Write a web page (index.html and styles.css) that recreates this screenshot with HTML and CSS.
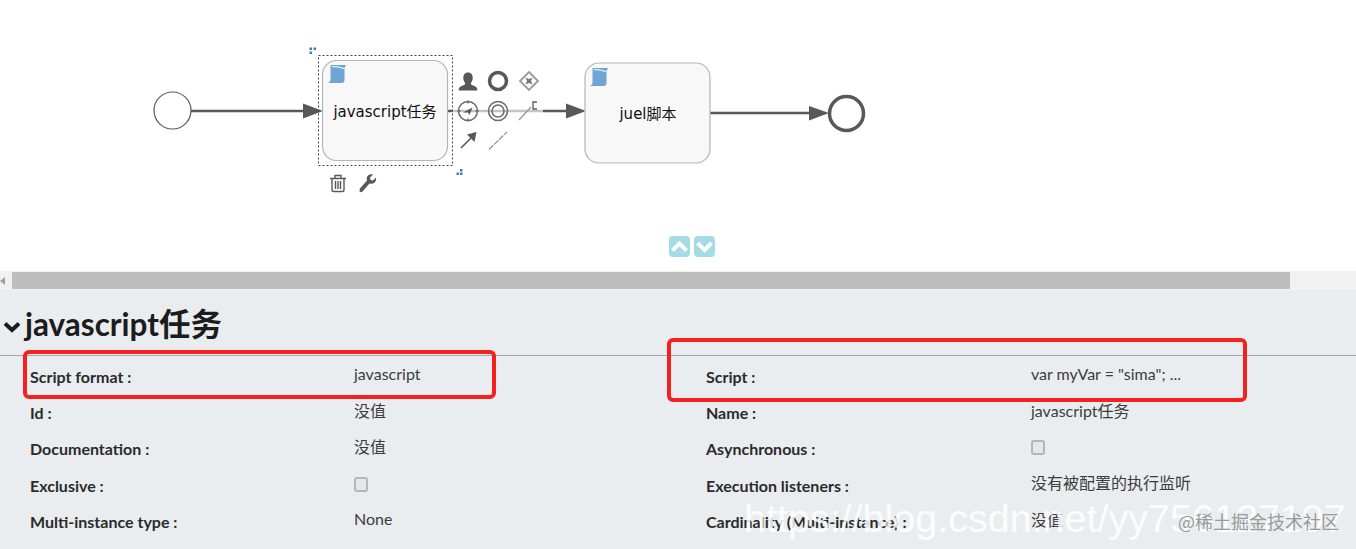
FILE: index.html
```html
<!DOCTYPE html>
<html>
<head>
    <title>Process editor</title>
    <link rel="stylesheet" href="styles.css">
</head>
<body>
    <div class="canvas">
        <svg class="diagram" width="1356" height="271" viewBox="0 0 1356 271">
            <defs>
                <g id="scroll">
                    <path d="M3 0H18.500C17 1 16.500 2.500 16.500 4.500V15c0 2-1 3-3 3H0c1.500-1 2.500-2 2.500-4V2C2.500 1 2.700.5 3 0z"/>
                    <path class="curl" d="M4 1.800C8 1 12 2.500 16.500 3.500"/>
                </g>
            </defs>

            <!-- flows -->
            <path class="flow" d="M191 111H305"/>
            <path class="arrow" d="M303 103.500L323 111L303 118.500z"/>
            <path class="flow" d="M447 111H452M543 111H566"/>
            <path class="flow-faded" d="M452 111H543"/>
            <path class="arrow" d="M566 103.500L586 111L566 118.500z"/>
            <path class="flow" d="M710 113H811"/>
            <path class="arrow" d="M809 106L829 113L809 120.500z"/>

            <!-- events -->
            <circle class="start" cx="172.500" cy="110.500" r="18.500"/>
            <circle class="end" cx="846.500" cy="113.500" r="17"/>

            <!-- tasks -->
            <rect class="task" x="322.500" y="60.500" width="125" height="100" rx="14"/>
            <rect class="task" x="585" y="63" width="125" height="100" rx="14"/>
            <use href="#scroll" class="scroll" x="328" y="65"/>
            <use href="#scroll" class="scroll" x="590" y="68"/>
            <text class="label" x="385" y="116.500" text-anchor="middle">javascript任务</text>
            <text class="label" x="648" y="119" text-anchor="middle">juel脚本</text>

            <!-- selection -->
            <rect class="select" x="318.500" y="55.500" width="134" height="110"/>
            <path class="handle" d="M309.500 47.500h2.500v2.500h-2.500zM313.500 47.500h2.500v2.500h-2.500zM309.500 51.500h2.500v2.500h-2.500zM460 169h2.500v2.500H460zM456.500 172.500h2.500v2.500h-2.500zM460 172.500h2.500v2.500H460z"/>

            <!-- shape menu -->
            <path class="tool" d="M468 72.500c3.300 0 4.700 2.600 4.700 5.200 0 2.700-1 4.200-1.900 5.300 0 1.700 1 2.200 3 2.800 2.600.8 3.600 2.100 3.600 4.700h-18.800c0-2.600 1-3.900 3.600-4.700 2-.6 3-1.100 3-2.800-.9-1.100-1.900-2.600-1.900-5.300 0-2.600 1.400-5.200 4.700-5.200z"/>
            <circle class="ring" cx="498" cy="81" r="8.500"/>
            <path class="diamond" d="M529 72l9 9-9 9-9-9z"/>
            <path class="tool-soft" d="M525.500 77.500l3.500 1.500 3.500-1.500-1.500 3.500 1.500 3.500-3.500-1.500-3.500 1.500 1.500-3.500z"/>

            <circle class="dial" cx="468" cy="111" r="9.500"/>
            <path class="ticks" d="M468 100.500v3M468 118.500v3M457.500 111h3M475.500 111h3"/>
            <path class="tool" d="M463 112.500l9.500-5-3 7.500-1.500-2.500z"/>
            <circle class="dial" cx="498" cy="111" r="9.500"/>
            <circle class="dial" cx="498" cy="111" r="6"/>
            <path class="line" d="M519 120L531 107"/>
            <path class="line dark-thin" d="M537 102h-4v7h4"/>

            <path class="line dark" d="M461 148L473 136"/>
            <path class="tool" d="M476.500 132L474.500 142L467 134.500z"/>
            <path class="line" d="M489 149.500L507 132" stroke-dasharray="6 1"/>

            <!-- trash and wrench -->
            <path class="bin" d="M330 178.500h16M335 178v-2.500h6v2.500M332 179v11c0 1 .5 1.500 1.500 1.500h9c1 0 1.500-.5 1.500-1.500v-11M335.500 181v8M338 181v8M340.500 181v8"/>
            <path class="tool" d="M359.500 189l7.500-8.500c-.8-2.500 0-4.500 1.500-5.500 1.500-.9 3-1 4.500-.5l-3 3 .5 2.500 2.500.5 3-3c.4 1.800 0 3.500-1.200 4.800-1.400 1.400-3.300 1.900-5.300 1.200l-7 8c-.8.900-1.800.9-2.500.3-.7-.7-.7-1.600 0-2.300z"/>

            <!-- up and down buttons -->
            <rect class="nudge" x="669" y="236" width="21" height="21" rx="4"/>
            <rect class="nudge" x="694" y="236" width="21" height="21" rx="4"/>
            <path class="chev" d="M672.500 250.500l7-7 7 7"/>
            <path class="chev" d="M697.500 243l7 7 7-7"/>
        </svg>
    </div>

    <div class="scrollbar">
        <span class="scroll-left"></span>
        <div class="scroll-thumb"></div>
    </div>

    <div class="panel">
        <h2 class="panel-title">
            <svg class="title-chev" width="18" height="12" viewBox="0 0 18 12"><path d="M2 2.500l7 6.500 7-6.500"/></svg>
            javascript任务
        </h2>
        <div class="props">
            <div class="prop"><span class="key">Script format :</span><span class="val val-up">javascript</span></div>
            <div class="prop"><span class="key">Script :</span><span class="val val-up">var myVar = "sima"; ...</span></div>
            <div class="prop"><span class="key">Id :</span><span class="val val-up">没值</span></div>
            <div class="prop"><span class="key">Name :</span><span class="val val-up">javascript任务</span></div>
            <div class="prop"><span class="key">Documentation :</span><span class="val val-up">没值</span></div>
            <div class="prop"><span class="key">Asynchronous :</span><span class="val"><input class="check" type="checkbox"></span></div>
            <div class="prop"><span class="key">Exclusive :</span><span class="val"><input class="check" type="checkbox"></span></div>
            <div class="prop"><span class="key">Execution listeners :</span><span class="val val-up">没有被配置的执行监听</span></div>
            <div class="prop"><span class="key">Multi-instance type :</span><span class="val val-up">None</span></div>
            <div class="prop"><span class="key">Cardinality (Multi-instance) :</span><span class="val val-up">没值</span></div>
        </div>
    </div>

    <div class="mark mark-left"></div>
    <div class="mark mark-right"></div>
    <div class="watermark">https://blog.csdn.net/yy756127197</div>
    <div class="juejin">@稀土掘金技术社区</div>
</body>
</html>
```

FILE: styles.css
```css
body {
    margin: 0;
    width: 1356px;
    height: 549px;
    overflow: hidden;
    position: relative;
    background-color: #fff;
    font-family: Lato, "Noto Sans CJK SC", sans-serif;
    color: #222;
}

.canvas {
    height: 271px;
}

.diagram {
    display: block;
}

.flow {
    fill: none;
    stroke: #585858;
    stroke-width: 2.5;
}

.flow-faded {
    fill: none;
    stroke: #c4c4c4;
    stroke-width: 2.5;
}

.arrow {
    fill: #585858;
}

.start {
    fill: #fff;
    stroke: #585858;
    stroke-width: 1.2;
}

.end {
    fill: #fff;
    stroke: #585858;
    stroke-width: 3.5;
}

.task {
    fill: #f8f8f8;
    stroke: #b5b5b5;
    stroke-width: 1.2;
}

.scroll {
    fill: #6ea5d3;
}

.curl {
    fill: none;
    stroke: #e4eef7;
    stroke-width: 1.2;
}

.label {
    font-family: "DejaVu Sans", "Noto Sans CJK SC", sans-serif;
    font-size: 15px;
    fill: #111;
}

.select {
    fill: none;
    stroke: #444;
    stroke-width: 1;
    stroke-dasharray: 2 2;
}

.handle {
    fill: #4a78b5;
}

.tool {
    fill: #585858;
}

.tool-soft {
    fill: #777;
}

.ring {
    fill: none;
    stroke: #585858;
    stroke-width: 3.5;
}

.diamond {
    fill: #fff;
    stroke: #999;
    stroke-width: 1.8;
}

.dial {
    fill: none;
    stroke: #6a6a6a;
    stroke-width: 1.5;
}

.ticks {
    fill: none;
    stroke: #6a6a6a;
    stroke-width: 1.5;
}

.line {
    fill: none;
    stroke: #999;
    stroke-width: 1.3;
}

.line.dark {
    stroke: #585858;
    stroke-width: 1.6;
}

.line.dark-thin {
    stroke: #585858;
    stroke-width: 1.3;
}

.bin {
    fill: none;
    stroke: #585858;
    stroke-width: 1.4;
}

.nudge {
    fill: #a3dbe6;
}

.chev {
    fill: none;
    stroke: #fff;
    stroke-width: 4;
}

.scrollbar {
    height: 19px;
    display: flex;
    align-items: center;
    background-color: #f1f1f1;
    position: relative;
}

.scroll-left {
    width: 0;
    height: 0;
    margin-right: 7px;
    border-top: 4px solid transparent;
    border-bottom: 4px solid transparent;
    border-right: 5px solid #a0a0a0;
}

.scroll-thumb {
    width: 1278px;
    height: 17px;
    background-color: #bebebe;
}

.panel {
    height: 259px;
    background-color: #e9edf0;
}

.panel-title {
    margin: 0;
    height: 66px;
    box-sizing: border-box;
    padding: 16px 0 0 3px;
    display: flex;
    align-items: flex-start;
    gap: 4px;
    font-size: 31.500px;
    line-height: 36px;
    font-weight: 700;
    color: #1c1c1c;
    border-bottom: 1px solid #a5a8ad;
}

.title-chev {
    margin-top: 15px;
}

.title-chev path {
    fill: none;
    stroke: #1c1c1c;
    stroke-width: 4;
}

.props {
    display: grid;
    grid-template-columns: 676px 650px;
    grid-auto-rows: 36.3px;
    padding: 2.2px 0 0 30px;
}

.prop {
    display: flex;
    align-items: center;
    font-size: 16px;
}

.key {
    font-weight: 700;
    color: #2b2b2b;
    width: 324px;
    white-space: nowrap;
}

.prop:nth-child(even) .key {
    width: 325px;
}

.val {
    color: #3c3c3c;
    display: flex;
    align-items: center;
}

.val-up {
    position: relative;
    top: -3px;
}

.check {
    appearance: none;
    margin: 0;
    width: 14px;
    height: 15px;
    position: relative;
    top: -1px;
    background-color: #e6e7e8;
    border: 2px solid #b4b6b8;
    border-radius: 3px;
    box-sizing: border-box;
}

.mark {
    position: absolute;
    border: 4px solid #f5211f;
    border-radius: 6px;
    box-sizing: border-box;
}

.mark-left {
    left: 23px;
    top: 350px;
    width: 473px;
    height: 49px;
}

.mark-right {
    left: 667px;
    top: 338px;
    width: 580px;
    height: 64px;
}

.watermark {
    position: absolute;
    left: 744px;
    top: 494px;
    font-family: "Liberation Sans", sans-serif;
    font-size: 39.500px;
    line-height: 48px;
    color: rgba(255, 255, 255, 0.85);
    white-space: nowrap;
}

.juejin {
    position: absolute;
    left: 1178px;
    top: 510px;
    font-family: "Noto Sans CJK SC", sans-serif;
    font-size: 18px;
    line-height: 22px;
    color: #9a9a9a;
    white-space: nowrap;
}
```
